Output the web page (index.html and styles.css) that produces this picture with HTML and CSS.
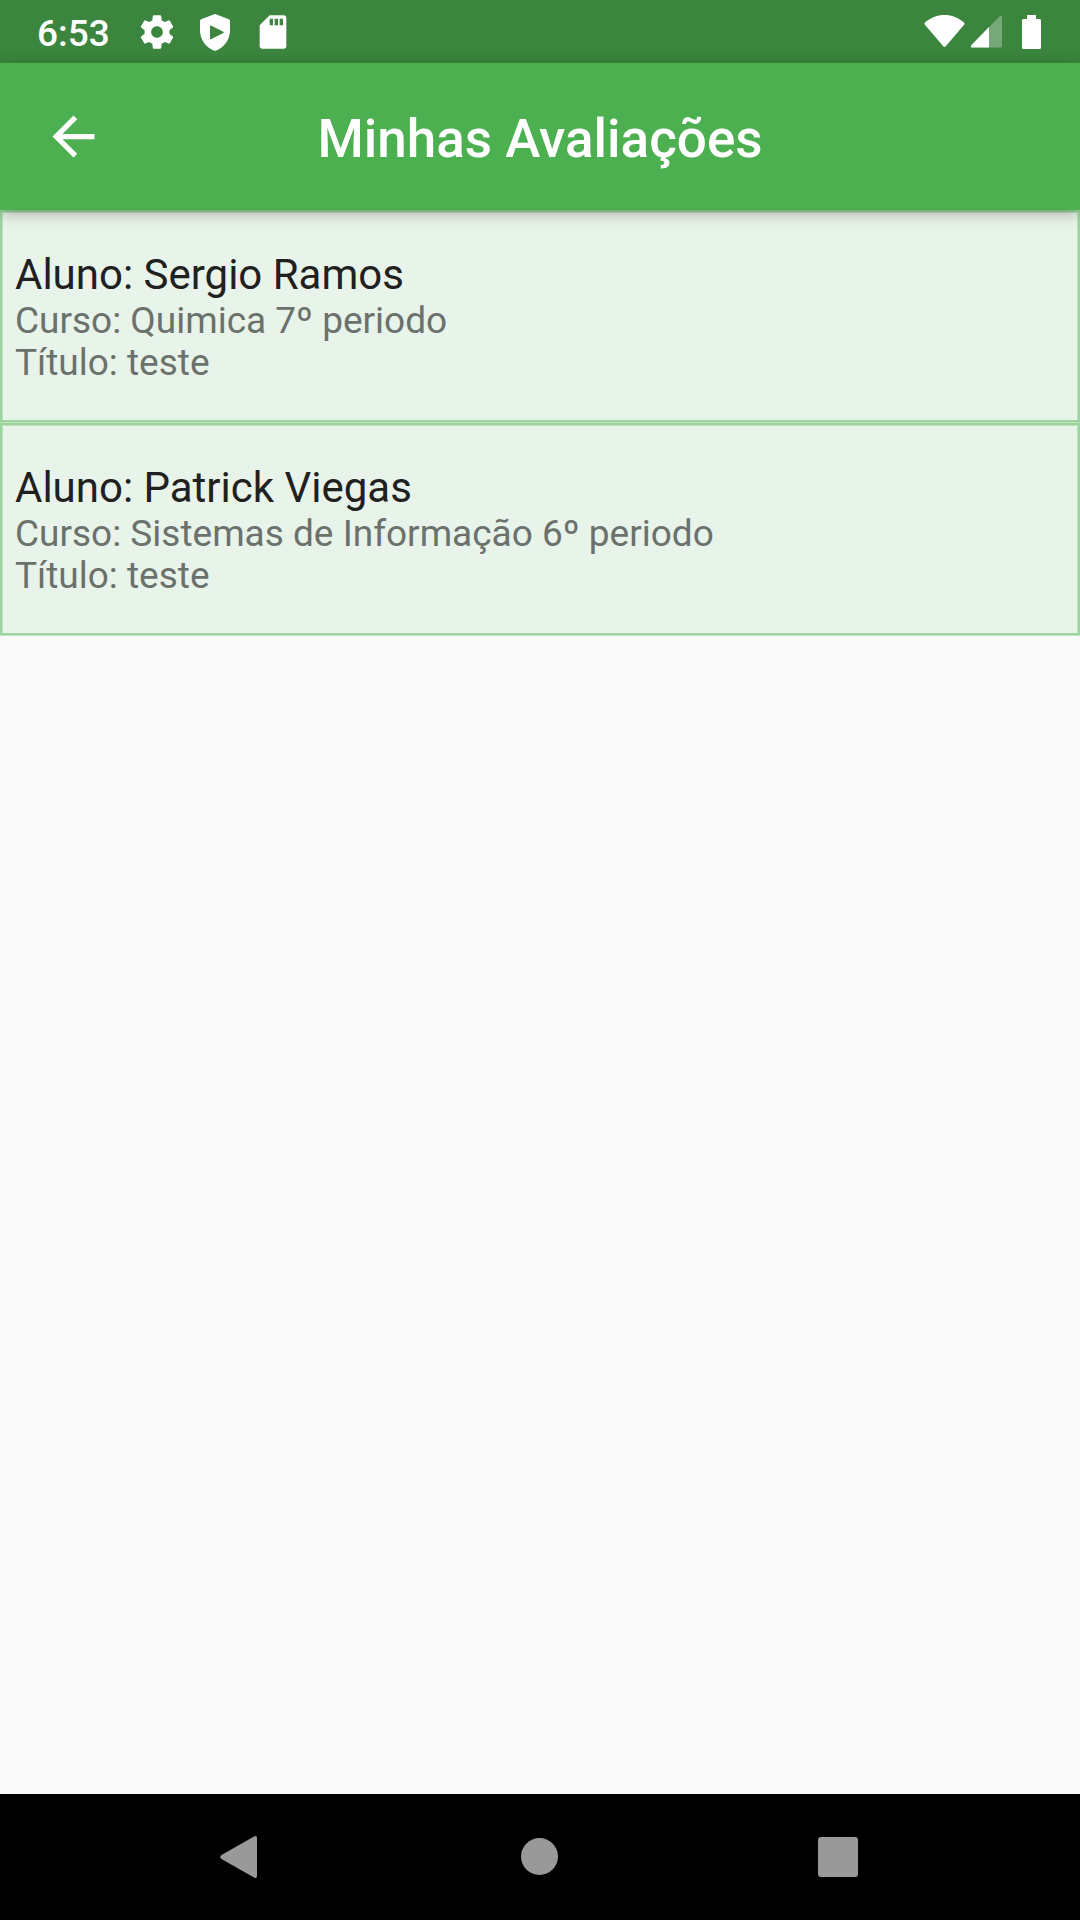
FILE: index.html
```html
<!DOCTYPE html>
<html lang="pt-BR">
<head>
<meta charset="utf-8">
<meta name="viewport" content="width=device-width, initial-scale=1">
<title>Minhas Avaliações</title>
<link rel="stylesheet" href="styles.css">
</head>
<body>
<div class="status-bar">
  <div class="status-left">
    <time class="clock">6:53</time>
    <svg class="status-icon" viewBox="0 0 24 24" aria-hidden="true"><path d="M19.43 12.98c.04-.32.07-.64.07-.98s-.03-.66-.07-.98l2.11-1.65c.19-.15.24-.42.12-.64l-2-3.46c-.12-.22-.39-.3-.61-.22l-2.49 1c-.52-.4-1.08-.73-1.69-.98l-.38-2.65C14.46 2.18 14.25 2 14 2h-4c-.25 0-.46.18-.49.42l-.38 2.65c-.61.25-1.17.59-1.69.98l-2.49-1c-.23-.09-.49 0-.61.22l-2 3.46c-.13.22-.07.49.12.64l2.11 1.65c-.04.32-.07.65-.07.98s.03.66.07.98l-2.11 1.65c-.19.15-.24.42-.12.64l2 3.46c.12.22.39.3.61.22l2.49-1c.52.4 1.08.73 1.69.98l.38 2.65c.03.24.24.42.49.42h4c.25 0 .46-.18.49-.42l.38-2.65c.61-.25 1.17-.59 1.69-.98l2.49 1c.23.09.49 0 .61-.22l2-3.46c.12-.22.07-.49-.12-.64l-2.11-1.65zM12 15.5c-1.93 0-3.5-1.57-3.5-3.5s1.57-3.5 3.5-3.5 3.5 1.57 3.5 3.5-1.57 3.5-3.5 3.5z"/></svg>
    <svg class="status-icon" viewBox="0 0 24 24" aria-hidden="true"><path fill-rule="evenodd" d="M11.5 1.4q.5-.3 1 0l7.800 2.900q.7.3.7 1V11c0 5.550-3.500 10.400-8.500 12.200q-.5.2-1 0C6.500 21.400 3 16.550 3 11V5.300q0-.7.700-1zM9 8.400v7.600q.1.500.6.300l7.400-3.700q.6-.4 0-.8L9.600 8.100q-.5-.2-.6.300z"/></svg>
    <svg class="status-icon" viewBox="0 0 24 24" aria-hidden="true"><path d="M18 2h-8L4.020 8 4 20.500c0 .8.700 1.500 1.500 1.500h13c.8 0 1.500-.7 1.500-1.500V3.500c0-.8-.7-1.500-1.500-1.500zM12 8h-2V4h2v4zm3 0h-2V4h2v4zm3 0h-2V4h2v4z"/></svg>
  </div>
  <div class="status-right">
    <svg class="wifi" viewBox="0 0 41 33" aria-hidden="true"><path d="M1 7.500C7 2.500 13 0 20.500 0S34 2.500 40 7.500q1 1 .3 2L22 31q-1.500 1.800-3 0L.7 9.500q-.7-1 .3-2z"/></svg>
    <svg class="signal" viewBox="0 0 31 32" aria-hidden="true"><path opacity=".3" d="M28.500.5q2.500-1.500 2.500 1V30q0 1.500-1.500 1.500H1.500q-2.500 0-1-2.500z"/><path d="M18 11v20.500H1.500q-2.500 0-1-2.500z"/></svg>
    <svg class="battery" viewBox="0 0 19 34" aria-hidden="true"><path d="M5 0h9v4h3.500Q19 4 19 5.500v27q0 1.500-1.500 1.500h-16Q0 34 0 32.500v-27Q0 4 1.500 4H5z"/></svg>
  </div>
</div>
<header class="app-bar">
  <button class="back" type="button" aria-label="Voltar">
    <svg class="back-icon" viewBox="0 0 24 24" aria-hidden="true"><path d="M20 11H7.830l5.590-5.590L12 4l-8 8 8 8 1.410-1.410L7.830 13H20v-2z"/></svg>
  </button>
  <h1 class="app-title">Minhas Avaliações</h1>
</header>
<main class="content">
  <ul class="reviews">
    <li class="review">
      <h2 class="student">Aluno: Sergio Ramos</h2>
      <p class="detail">Curso: Quimica 7º periodo</p>
      <p class="detail">Título: teste</p>
    </li>
    <li class="review">
      <h2 class="student">Aluno: Patrick Viegas</h2>
      <p class="detail">Curso: Sistemas de Informação 6º periodo</p>
      <p class="detail">Título: teste</p>
    </li>
  </ul>
</main>
<nav class="nav-bar" aria-label="Sistema">
  <button class="nav-button" type="button" aria-label="Voltar"><svg class="nav-icon" viewBox="0 0 44 44" aria-hidden="true"><path d="M34 1.500q3-1.500 3 1.500v38q0 3-3 1.500L1.500 24q-2.500-2 0-4z"/></svg></button>
  <button class="nav-button" type="button" aria-label="Início"><svg class="nav-icon" viewBox="0 0 44 44" aria-hidden="true"><circle cx="21.500" cy="21.500" r="18.500"/></svg></button>
  <button class="nav-button" type="button" aria-label="Recentes"><svg class="nav-icon" viewBox="0 0 44 44" aria-hidden="true"><rect x="2" y="2" width="40" height="40" rx="3"/></svg></button>
</nav>
</body>
</html>
```
FILE: styles.css
```css
* {
  box-sizing: border-box;
}

body {
  margin: 0;
  min-height: 100vh;
  display: flex;
  flex-direction: column;
  background: #fafafa;
  font-family: Roboto, "Noto Sans", sans-serif;
}

h1, h2, p, ul {
  margin: 0;
  padding: 0;
}

button {
  padding: 0;
  border: 0;
  background: none;
}

svg {
  display: block;
  fill: currentColor;
}

.status-bar {
  display: flex;
  justify-content: space-between;
  align-items: center;
  height: 63px;
  padding: 0 39px 0 37px;
  background: #3b853e;
  color: #fff;
}

.status-left {
  display: flex;
  align-items: center;
  gap: 18px;
}

.clock {
  width: 82px;
  padding-top: 4px;
  font-size: 37px;
  font-weight: 500;
  line-height: 44px;
}

.status-icon {
  width: 40px;
  height: 40px;
}

.status-right {
  display: flex;
  align-items: center;
}

.wifi {
  width: 41px;
  height: 33px;
  margin-right: 6px;
}

.signal {
  width: 31px;
  height: 32px;
  margin-right: 20px;
}

.battery {
  width: 19px;
  height: 34px;
}

.app-bar {
  position: relative;
  display: grid;
  grid-template-columns: 147px 1fr 147px;
  align-items: center;
  height: 147px;
  background: #4caf50;
  color: #fff;
  box-shadow: 0 4px 14px rgba(0, 0, 0, 0.26);
}

.back {
  display: grid;
  place-items: center;
  height: 147px;
  color: inherit;
}

.back-icon {
  width: 63px;
  height: 63px;
}

.app-title {
  padding-top: 4px;
  font-size: 53px;
  font-weight: 500;
  line-height: 62px;
  text-align: center;
}

.content {
  flex: 1;
}

.reviews {
  list-style: none;
}

.review {
  min-height: 212px;
  margin-bottom: 1px;
  padding: 38px 13px 32px;
  border: 2px solid #9cd49f;
  box-shadow: inset 1px 1px #bfe1c1, inset -1px 0 #bfe1c1, 0 1px #bfe1c1;
  background: #e8f3e9;
}

.student {
  color: #1f2120;
  font-size: 42px;
  font-weight: 400;
  line-height: 50px;
}

.detail {
  color: #6b716c;
  font-size: 37px;
  line-height: 42px;
}

.nav-bar {
  display: flex;
  justify-content: center;
  height: 126px;
  background: #000;
  color: #999;
}

.nav-button {
  display: grid;
  place-items: center;
  width: 298px;
  color: inherit;
}

.nav-icon {
  width: 44px;
  height: 44px;
}
```
